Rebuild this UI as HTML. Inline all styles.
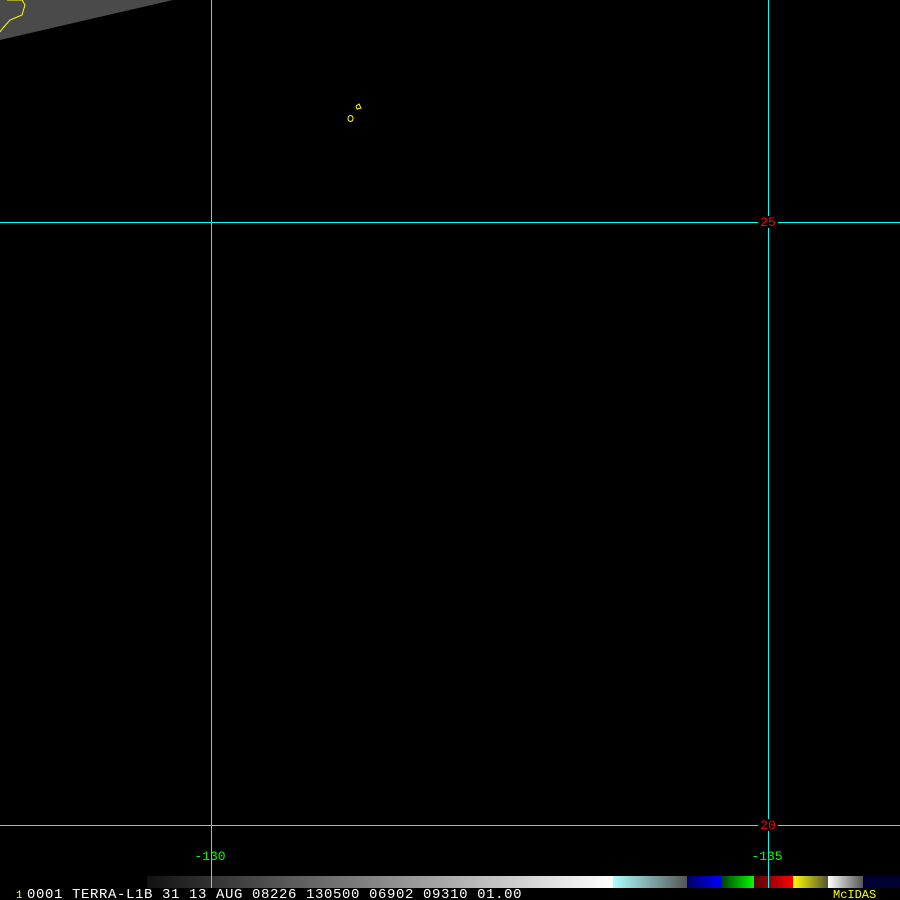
<!DOCTYPE html>
<html><head><meta charset="utf-8"><style>
html,body{margin:0;padding:0;background:#000;width:900px;height:900px;overflow:hidden}
svg{display:block}
text{font-family:"Liberation Mono",monospace}
</style></head><body>
<svg width="900" height="900" xmlns="http://www.w3.org/2000/svg">
<defs>
<linearGradient id="g1" x1="0" x2="1"><stop offset="0" stop-color="#111"/><stop offset="1" stop-color="#fff"/></linearGradient>
<linearGradient id="g2" x1="0" x2="1"><stop offset="0" stop-color="#aff"/><stop offset="1" stop-color="#555"/></linearGradient>
<linearGradient id="g3" x1="0" x2="1"><stop offset="0" stop-color="#006"/><stop offset="1" stop-color="#00f"/></linearGradient>
<linearGradient id="g4" x1="0" x2="1"><stop offset="0" stop-color="#040"/><stop offset="1" stop-color="#0f0"/></linearGradient>
<linearGradient id="g5" x1="0" x2="1"><stop offset="0" stop-color="#500"/><stop offset="1" stop-color="#f00"/></linearGradient>
<linearGradient id="g6" x1="0" x2="1"><stop offset="0" stop-color="#ff0"/><stop offset="1" stop-color="#553"/></linearGradient>
<linearGradient id="g7" x1="0" x2="1"><stop offset="0" stop-color="#fff"/><stop offset="1" stop-color="#555"/></linearGradient>
</defs>
<polygon points="0,0 173,0 0,40" fill="#4a4a4a"/>
<polyline points="7,0 22,0 25,5 22,15 10,20 3,28 0,32" fill="none" stroke="#ff0" stroke-width="1"/>
<polyline points="356,106 359,104 361,108 357,109 356,106" fill="none" stroke="#ff0" stroke-width="1"/>
<ellipse cx="350.5" cy="118.5" rx="2.5" ry="3" fill="none" stroke="#ff0" stroke-width="1"/>
<rect x="0" y="222" width="900" height="1" fill="#0ff"/>
<rect x="0" y="825" width="900" height="1" fill="#0ff"/>
<rect x="211" y="0" width="1" height="888" fill="#0ff"/>
<rect x="768" y="0" width="1" height="888" fill="#0ff"/>
<rect x="758" y="216" width="20" height="12" fill="#000"/>
<text x="768" y="226" fill="#f00" font-size="13" text-anchor="middle">25</text>
<rect x="758" y="819" width="20" height="12" fill="#000"/>
<text x="768" y="829" fill="#f00" font-size="13" text-anchor="middle">20</text>
<text x="210" y="860" fill="#0f0" font-size="13" text-anchor="middle">-130</text>
<text x="767" y="860" fill="#0f0" font-size="13" text-anchor="middle">-135</text>
<rect x="147" y="876" width="466" height="12" fill="url(#g1)"/>
<rect x="613" y="876" width="74" height="12" fill="url(#g2)"/>
<rect x="687" y="876" width="35" height="12" fill="url(#g3)"/>
<rect x="722" y="876" width="32" height="12" fill="url(#g4)"/>
<rect x="754" y="876" width="39" height="12" fill="url(#g5)"/>
<rect x="793" y="876" width="35" height="12" fill="url(#g6)"/>
<rect x="828" y="876" width="35" height="12" fill="url(#g7)"/>
<rect x="863" y="876" width="37" height="12" fill="#003"/>
<rect x="768" y="876" width="1" height="12" fill="#0ff"/>
<rect x="211" y="876" width="1" height="12" fill="#0ff"/>
<text x="16" y="898" fill="#ff0" font-size="11">1</text>
<text x="27" y="898" fill="#fff" font-size="14" letter-spacing="0.6">0001 TERRA-L1B 31 13 AUG 08226 130500 06902 09310 01.00</text>
<text x="833" y="898" fill="#ff0" font-size="12">McIDAS</text>
</svg>
</body></html>
